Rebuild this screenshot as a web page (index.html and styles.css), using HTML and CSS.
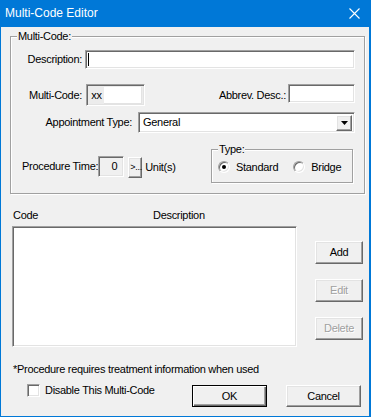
FILE: index.html
```html
<!DOCTYPE html>
<html lang="en">
<head>
<meta charset="UTF-8" />
<title>Multi-Code Editor</title>
<link rel="stylesheet" href="styles.css">
</head>
<body>
  <div class="window">
    <div class="titlebar">
      <span class="title">Multi-Code Editor</span>
      <svg class="close" width="11" height="11" viewBox="0 0 11 11">
        <path d="M0.5 0.5 L10.5 10.5 M10.5 0.5 L0.5 10.5" stroke="#fff" stroke-width="1.1" fill="none"/>
      </svg>
    </div>

    <div class="content">
      <!-- top group -->
      <div class="group main">
        <span class="legend">Multi-Code:</span>

        <div class="row r1">
          <span class="lbl">Description:</span>
          <div class="sunken desc"><span class="caret"></span></div>
        </div>

        <div class="row r2">
          <span class="lbl">Multi-Code:</span>
          <div class="sunken mc">
            <span class="mc-prefix">xx</span>
            <span class="mc-input"></span>
          </div>
          <span class="lbl-abbrev">Abbrev. Desc.:</span>
          <div class="sunken abbrev"></div>
        </div>

        <div class="row r3">
          <span class="lbl-appt">Appointment Type:</span>
          <div class="sunken combo">
            <span class="combo-text">General</span>
            <span class="raised combo-btn">
              <svg width="7" height="4" viewBox="0 0 7 4"><path d="M0 0 H7 L3.5 4 Z" fill="#000"/></svg>
            </span>
          </div>
        </div>

        <div class="row r4">
          <span class="lbl-proc">Procedure Time:</span>
          <div class="sunken readonly time">0</div>
          <span class="raised more">&gt;...</span>
          <span class="units">Unit(s)</span>

          <div class="group type">
            <span class="legend">Type:</span>
            <div class="radio-row">
              <span class="radio checked"></span>
              <span class="radio-lbl">Standard</span>
              <span class="radio bridge"></span>
              <span class="radio-lbl">Bridge</span>
            </div>
          </div>
        </div>
      </div>

      <!-- list -->
      <div class="lower">
        <div class="headers">
          <span class="h-code">Code</span>
          <span class="h-desc">Description</span>
        </div>
        <div class="list-row">
          <div class="sunken listbox"></div>
          <div class="side-buttons">
            <span class="raised btn">Add</span>
            <span class="raised btn disabled">Edit</span>
            <span class="raised btn disabled">Delete</span>
          </div>
        </div>

        <p class="note">*Procedure requires treatment information when used</p>

        <div class="bottom-row">
          <span class="check-wrap">
            <span class="checkbox"></span>
            <span class="check-lbl">Disable This Multi-Code</span>
          </span>
          <span class="raised btn wide default">OK</span>
          <span class="raised btn wide cancel">Cancel</span>
        </div>
      </div>
    </div>
  </div>
</body>
</html>
```

FILE: styles.css
```css
body{
  margin: 0;
  font-family: "Liberation Sans", Arial, sans-serif;
  font-size: 11px;
  line-height: 13px;
  letter-spacing: -0.3px;
  color: #000;
}

.window{
  width: 371px;
  height: 417px;
  background-color: #0078d7;
  display: flex;
  flex-direction: column;
  box-sizing: border-box;
}

.titlebar{
  height: 27px;
  flex: none;
  display: flex;
  align-items: center;
  padding-left: 5px;
  padding-bottom: 1px;
  box-sizing: border-box;
  color: #fff;
  font-size: 12px;
  letter-spacing: 0;
}

.title{
  flex: 1;
}

.close{
  margin-right: 11px;
}

.content{
  flex: 1;
  margin: 0 2px 1px 1px;
  background-color: #f0f0f0;
}

/* 3d borders */
.sunken{
  box-sizing: border-box;
  border: 1px solid;
  border-color: #a0a0a0 #fff #fff #a0a0a0;
  box-shadow: inset 1px 1px 0 #696969, inset -1px -1px 0 #e3e3e3;
  background-color: #fff;
}

.raised{
  box-sizing: border-box;
  border: 1px solid;
  border-color: #fff #696969 #696969 #fff;
  box-shadow: inset -1px -1px 0 #a0a0a0, inset 1px 1px 0 #e3e3e3;
  background-color: #f0f0f0;
  display: flex;
  align-items: center;
  justify-content: center;
}

/* group boxes */
.group{
  position: relative;
  box-sizing: border-box;
  border: 1px solid #a0a0a0;
  box-shadow: 1px 1px 0 #fff, inset 1px 1px 0 #fff;
}

.legend{
  position: absolute;
  top: -7px;
  left: 6px;
  padding: 0 1px;
  background-color: #f0f0f0;
}

.main{
  width: 355px;
  height: 158px;
  margin: 9px 0 0 9px;
}

.row{
  display: flex;
  align-items: center;
  padding-right: 9px;
}

.lbl{
  width: 71px;
  text-align: right;
}

.r1{
  margin-top: 13px;
  height: 19px;
}

.desc{
  width: 270px;
  height: 19px;
  margin-left: 3px;
  position: relative;
}

.caret{
  position: absolute;
  left: 2px;
  top: 2px;
  width: 1px;
  height: 13px;
  background-color: #000;
}

.r2{
  margin-top: 15px;
  height: 22px;
}

.mc{
  width: 59px;
  height: 22px;
  margin-left: 4px;
  display: flex;
  align-items: center;
  background-color: #ececec;
  padding: 2px 2px 2px 2px;
}

.mc-prefix{
  width: 15px;
  text-align: center;
}

.mc-input{
  flex: 1;
  height: 17px;
  background-color: #fff;
  border-right: 1px solid #e3e3e3;
  border-bottom: 1px solid #e3e3e3;
  box-sizing: border-box;
}

.lbl-abbrev{
  margin-left: auto;
  margin-right: 2px;
}

.abbrev{
  width: 67px;
  height: 19px;
  align-self: flex-start;
}

.r3{
  margin-top: 6px;
  height: 21px;
  justify-content: flex-end;
}

.lbl-appt{
  margin-right: 6px;
}

.combo{
  width: 217px;
  height: 21px;
  display: flex;
  align-items: center;
  padding: 2px;
}

.combo-text{
  flex: 1;
  padding-left: 2px;
}

.combo-btn{
  width: 16px;
  height: 16px;
  margin-top: 1px;
}

.r4{
  margin-top: 16px;
  height: 34px;
  padding-left: 11px;
  padding-right: 11px;
}

.readonly{
  background-color: #f0f0f0;
}

.time{
  width: 26px;
  height: 21px;
  text-align: right;
  padding: 3px 6px 0 0;
}

.more{
  width: 14px;
  height: 21px;
  margin-left: 4px;
  margin-top: 2px;
  padding-left: 1px;
  justify-content: flex-start;
  white-space: nowrap;
  font-size: 9px;
  letter-spacing: -0.2px;
}

.units{
  margin-left: 3px;
  margin-top: 2px;
}

.type{
  margin-left: auto;
  width: 142px;
  height: 34px;
  display: flex;
  align-items: center;
}

.radio-row{
  display: flex;
  align-items: center;
  padding-left: 6px;
  padding-top: 2px;
}

.radio{
  width: 12px;
  height: 12px;
  box-sizing: border-box;
  border-radius: 50%;
  border: 1px solid;
  border-color: #a0a0a0 #fff #fff #a0a0a0;
  box-shadow: inset 1px 1px 0 #696969, inset -1px -1px 0 #e3e3e3;
  background-color: #fff;
  position: relative;
}

.checked::after{
  content: "";
  position: absolute;
  left: 3px;
  top: 3px;
  width: 4px;
  height: 4px;
  border-radius: 50%;
  background-color: #000;
}

.radio-lbl{
  margin-left: 6px;
}

.bridge{
  margin-left: 15px;
}

/* lower area */
.lower{
  padding-left: 11px;
}

.headers{
  display: flex;
  margin-top: 15px;
  padding-left: 1px;
}

.h-code{
  width: 140px;
}

.list-row{
  display: flex;
  margin-top: 4px;
}

.listbox{
  width: 285px;
  height: 121px;
}

.side-buttons{
  display: flex;
  flex-direction: column;
  gap: 15px;
  margin-left: 18px;
  padding-top: 15px;
}

.btn{
  width: 48px;
  height: 23px;
}

.disabled{
  color: #a0a0a0;
  text-shadow: 1px 1px 0 #fff;
}

.note{
  margin: 16px 0 0 1px;
}

.bottom-row{
  display: flex;
  align-items: flex-start;
  margin-top: 8px;
}

.check-wrap{
  display: flex;
  align-items: center;
  width: 165px;
  margin-left: 15px;
}

.checkbox{
  width: 13px;
  height: 13px;
  box-sizing: border-box;
  border: 1px solid;
  border-color: #a0a0a0 #fff #fff #a0a0a0;
  box-shadow: inset 1px 1px 0 #696969, inset -1px -1px 0 #e3e3e3;
  background-color: #fff;
}

.check-lbl{
  margin-left: 5px;
}

.wide{
  width: 75px;
  height: 22px;
  margin-top: 1px;
}

.default{
  border: 1px solid #000;
  box-shadow: inset 1px 1px 0 #fff, inset -1px -1px 0 #696969, inset -2px -2px 0 #a0a0a0;
}

.cancel{
  margin-left: 19px;
}
```
